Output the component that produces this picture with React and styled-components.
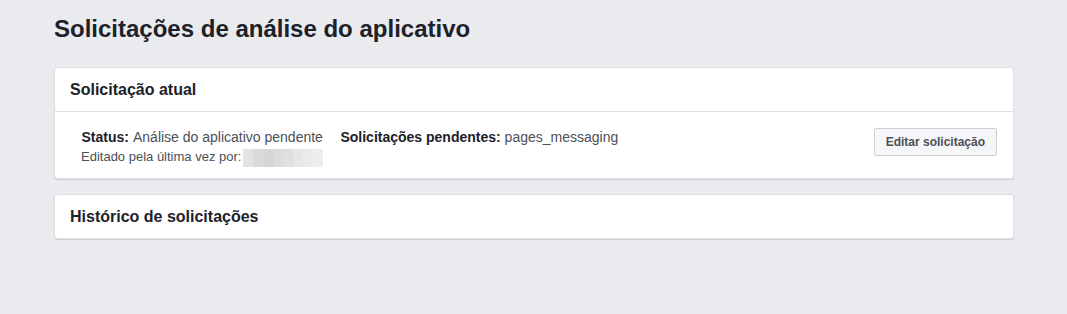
import React from 'react'
import styled, { createGlobalStyle } from 'styled-components'

const GlobalStyle = createGlobalStyle`
  html, body {
    margin: 0;
    padding: 0;
    background: #e9ebee;
    font-family: 'Liberation Sans', Arial, Helvetica, sans-serif;
    color: #1d2129;
  }
`

const Page = styled.div`
  width: 1067px;
  height: 314px;
  padding: 14px 53px 0 54px;
  box-sizing: border-box;
`

const Title = styled.h1`
  margin: 0 0 24px 0;
  font-size: 24px;
  line-height: 29px;
  font-weight: bold;
  color: #1d2129;
`

const Card = styled.div`
  background: #fff;
  border: 1px solid #dddfe2;
  border-radius: 3px;
  box-shadow: 0 1px 1px rgba(0, 0, 0, 0.12);
  margin-bottom: 15px;
`

const CardHeader = styled.div`
  height: 43px;
  padding: 0 15px;
  display: flex;
  align-items: center;
  font-size: 16px;
  font-weight: bold;
  color: #1d2129;
  border-bottom: ${(p) => (p.$divider ? '1px solid #dddfe2' : 'none')};
`

const CardBody = styled.div`
  display: flex;
  align-items: flex-start;
  padding: 15px 16px 11px 26px;
  font-size: 14px;
  color: #4b4f56;
`

const StatusCol = styled.div`
  display: flex;
  flex-direction: column;
  align-items: center;
  line-height: 20px;
`

const Line = styled.div`
  display: flex;
  align-items: center;
  gap: ${(p) => (p.$small ? '2px' : '4px')};
  font-size: ${(p) => (p.$small ? '13px' : '14px')};
`

const Label = styled.span`
  font-weight: bold;
  color: #1d2129;
`

const Pending = styled.div`
  margin-left: 17px;
  line-height: 20px;
  flex: 1;
`

const Blurred = styled.span`
  display: inline-flex;
  height: 18px;
  margin-top: 1px;
  span {
    width: 10px;
    height: 18px;
  }
`

const EditButton = styled.button`
  margin-top: 1px;
  height: 28px;
  padding: 0 11px;
  border: 1px solid #ccd0d5;
  border-radius: 2px;
  background: #f5f6f7;
  font-family: inherit;
  font-size: 12px;
  font-weight: bold;
  color: #4b4f56;
  cursor: pointer;
`

const blurColors = ['#e3e3e3', '#dadada', '#d6d6d6', '#dcdcdc', '#e0e0e0', '#e6e6e6', '#ebebeb', '#eeeeee']

export default function App() {
  return (
    <>
      <GlobalStyle />
      <Page>
        <Title>Solicitações de análise do aplicativo</Title>
        <Card>
          <CardHeader $divider>Solicitação atual</CardHeader>
          <CardBody>
            <StatusCol>
              <Line>
                <Label>Status:</Label> Análise do aplicativo pendente
              </Line>
              <Line $small>
                Editado pela última vez por:
                <Blurred>
                  {blurColors.map((c, i) => (
                    <span key={i} style={{ background: c }} />
                  ))}
                </Blurred>
              </Line>
            </StatusCol>
            <Pending>
              <Label>Solicitações pendentes:</Label> pages_messaging
            </Pending>
            <EditButton>Editar solicitação</EditButton>
          </CardBody>
        </Card>
        <Card>
          <CardHeader>Histórico de solicitações</CardHeader>
        </Card>
      </Page>
    </>
  )
}
